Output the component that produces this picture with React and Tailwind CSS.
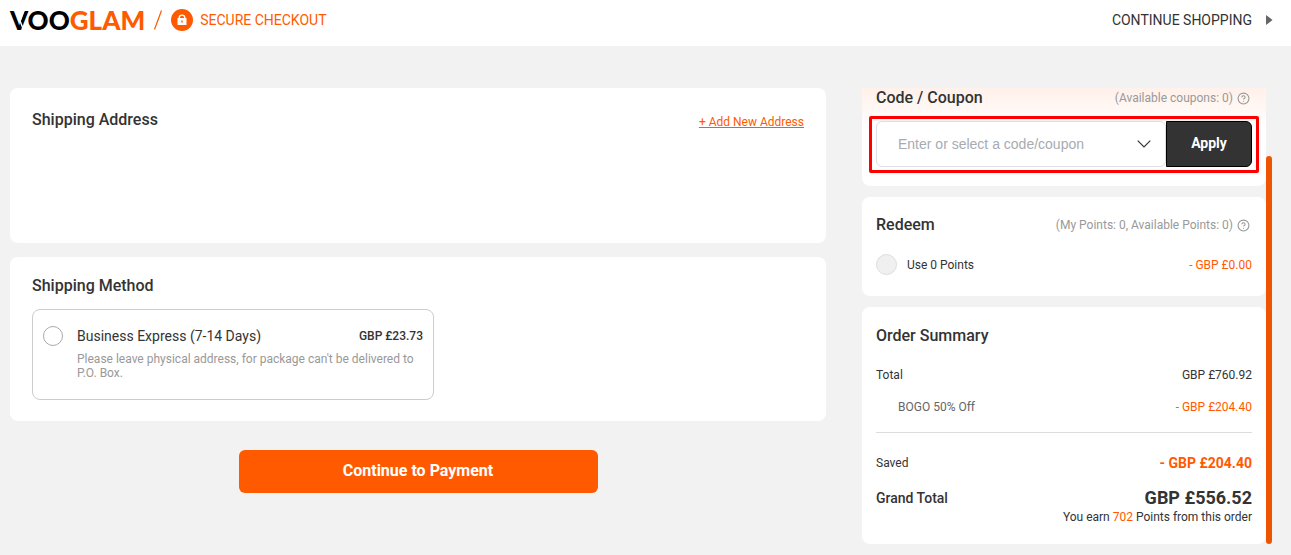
import { CircleHelp } from "lucide-react";

function Logo() {
  return (
    <a href="#" aria-label="VooGlam" className="relative block font-['Lato',sans-serif] text-[26px] leading-6 font-black text-black">
      VOO<span className="text-[#ff5a00]">GLAM</span>
      <svg className="absolute top-0 left-0" width="20" height="24" viewBox="0 0 20 24" aria-hidden="true">
        <path d="M14.6 1 L10.1 13 L12.8 20" stroke="#fff" strokeWidth="1.4" fill="none" />
      </svg>
    </a>
  );
}

function LockBadge() {
  return (
    <svg width="22" height="22" viewBox="0 0 22 22" aria-hidden="true">
      <circle cx="11" cy="11" r="11" fill="#ff5a00" />
      <path d="M8.3 10V8.3a2.7 2.2 0 0 1 5.4 0V10" stroke="#fff" strokeWidth="1.4" fill="none" />
      <rect x="6.5" y="9" width="9" height="7" rx="0.6" fill="#fff" />
      <rect x="10.3" y="11.3" width="1.4" height="2.4" rx="0.7" fill="#ff5a00" />
    </svg>
  );
}

function CardHeader({ title, note }) {
  return (
    <div className="flex items-center justify-between">
      <h2 className="text-base leading-5 font-medium">{title}</h2>
      <span className="flex items-center gap-1 pr-[2px] text-xs leading-5 text-[#999]">
        {note}
        <CircleHelp size={13} strokeWidth={2} aria-hidden="true" />
      </span>
    </div>
  );
}

export default function App() {
  return (
    <div className="min-h-screen bg-[#f2f2f2] font-['Roboto',sans-serif] text-[#333]">
      <header className="flex h-[46px] items-start justify-between bg-white pr-[18px] pl-[10px]">
        <div className="flex items-center pt-2">
          <Logo />
          <svg className="mx-[9px]" width="8" height="20" viewBox="0 0 8 20" aria-hidden="true">
            <path d="M7.5 0.5 L0.5 19.5" stroke="#ff5a00" strokeWidth="1.2" />
          </svg>
          <LockBadge />
          <span className="ml-[7px] text-sm leading-5 text-[#ff5a00]">SECURE CHECKOUT</span>
        </div>
        <a href="#" className="flex items-center gap-[14px] pt-[10px] text-sm leading-5">
          CONTINUE SHOPPING
          <svg width="7" height="10" viewBox="0 0 7 10" aria-hidden="true">
            <path d="M0 0 L6.5 5 L0 10 Z" fill="#666" />
          </svg>
        </a>
      </header>

      <main className="flex gap-9 pt-[42px] pr-[19px] pb-[11px] pl-[10px]">
        <div className="flex min-w-0 flex-1 flex-col">
          <section className="min-h-[155px] rounded-lg bg-white px-[22px] pt-[22px]">
            <div className="flex items-start justify-between">
              <h2 className="text-base leading-5 font-medium">Shipping Address</h2>
              <a href="#" className="mt-[2px] text-xs leading-5 text-[#ff5a00] underline">+ Add New Address</a>
            </div>
          </section>

          <section className="mt-[14px] rounded-lg bg-white px-[22px] pt-[19px] pb-[21px]">
            <h2 className="text-base leading-5 font-medium">Shipping Method</h2>
            <label className="mt-[13px] flex w-[402px] max-w-full items-start rounded-lg border border-[#ccc] px-[10px] pt-4 pb-[19px]">
              <input type="radio" name="method" className="size-5 shrink-0 appearance-none rounded-full border border-[#aaa] bg-white" />
              <span className="ml-[14px] flex-1">
                <span className="flex items-center justify-between leading-5">
                  <span className="text-sm leading-5">Business Express (7-14 Days)</span>
                  <span className="text-xs leading-5 font-medium">GBP £23.73</span>
                </span>
                <span className="mt-[6px] block text-xs leading-[14px] text-[#999]">
                  Please leave physical address, for package can't be delivered to P.O. Box.
                </span>
              </span>
            </label>
          </section>

          <button type="button" className="mt-[29px] h-[43px] w-[359px] max-w-full self-center rounded-md bg-[#ff5a00] pb-[2px] text-base font-bold text-white">
            Continue to Payment
          </button>
        </div>

        <aside className="flex shrink-0">
          <div className="flex w-[404px] flex-col gap-[11px]">
            <section className="rounded-b-lg bg-white bg-linear-to-b from-[#fff0ea] to-white to-[40px] px-[14px] pb-[19px]">
              <CardHeader title="Code / Coupon" note="(Available coupons: 0)" />
              <div className="relative mt-[13px] flex h-[46px]">
                <div className="flex flex-1 items-center rounded-md border border-[#dcdfe6] bg-white pr-[14px] pl-[21px]">
                  <input
                    aria-label="Code or coupon"
                    placeholder="Enter or select a code/coupon"
                    className="min-w-0 flex-1 bg-transparent font-['Liberation_Sans',sans-serif] text-sm outline-none placeholder:text-[#a8abb2]"
                  />
                  <svg width="14" height="8" viewBox="0 0 14 8" fill="none" aria-hidden="true">
                    <path d="M0.7 0.7 L7 7 L13.3 0.7" stroke="#333" strokeWidth="1.2" />
                  </svg>
                </div>
                <button type="button" className="w-[86px] rounded-r-md border border-black bg-[#333] pb-[2px] text-sm font-bold text-white">
                  Apply
                </button>
                <div className="pointer-events-none absolute -inset-x-[7px] -top-[5px] -bottom-[6px] rounded-xs border-3 border-[#ff0000]" />
              </div>
            </section>

            <section className="rounded-lg bg-white px-[14px] pt-[18px] pb-[21px]">
              <CardHeader title="Redeem" note="(My Points: 0, Available Points: 0)" />
              <div className="mt-[19px] flex items-center justify-between text-xs leading-5">
                <label className="flex items-center gap-[10px]">
                  <input type="checkbox" disabled className="size-[21px] appearance-none rounded-full border border-[#ddd] bg-[#f0f0f0]" />
                  Use 0 Points
                </label>
                <span className="text-[#ff5a00]">- GBP £0.00</span>
              </div>
            </section>

            <section className="rounded-lg bg-white px-[14px] pt-[19px] pb-[18px] text-xs leading-5">
              <h2 className="text-base leading-5 font-medium">Order Summary</h2>
              <div className="mt-[19px] flex justify-between">
                <span>Total</span>
                <span>GBP £760.92</span>
              </div>
              <div className="mt-3 flex justify-between border-b border-[#dcdcdc] pb-[15px]">
                <span className="pl-[22px] text-[#666]">BOGO 50% Off</span>
                <span className="text-[#ff5a00]">- GBP £204.40</span>
              </div>
              <div className="mt-5 flex justify-between">
                <span>Saved</span>
                <span className="text-sm leading-5 font-bold text-[#ff5a00]">- GBP £204.40</span>
              </div>
              <div className="mt-[15px] flex justify-between">
                <span className="text-sm leading-5 font-medium">Grand Total</span>
                <span className="text-lg leading-5 font-bold">GBP £556.52</span>
              </div>
              <p className="text-right leading-[18px]">
                You earn <span className="text-[#ff5a00]">702</span> Points from this order
              </p>
            </section>
          </div>
          <div className="mt-[68px] w-[6px] rounded-full bg-[#ee5500]" aria-hidden="true" />
        </aside>
      </main>
    </div>
  );
}
